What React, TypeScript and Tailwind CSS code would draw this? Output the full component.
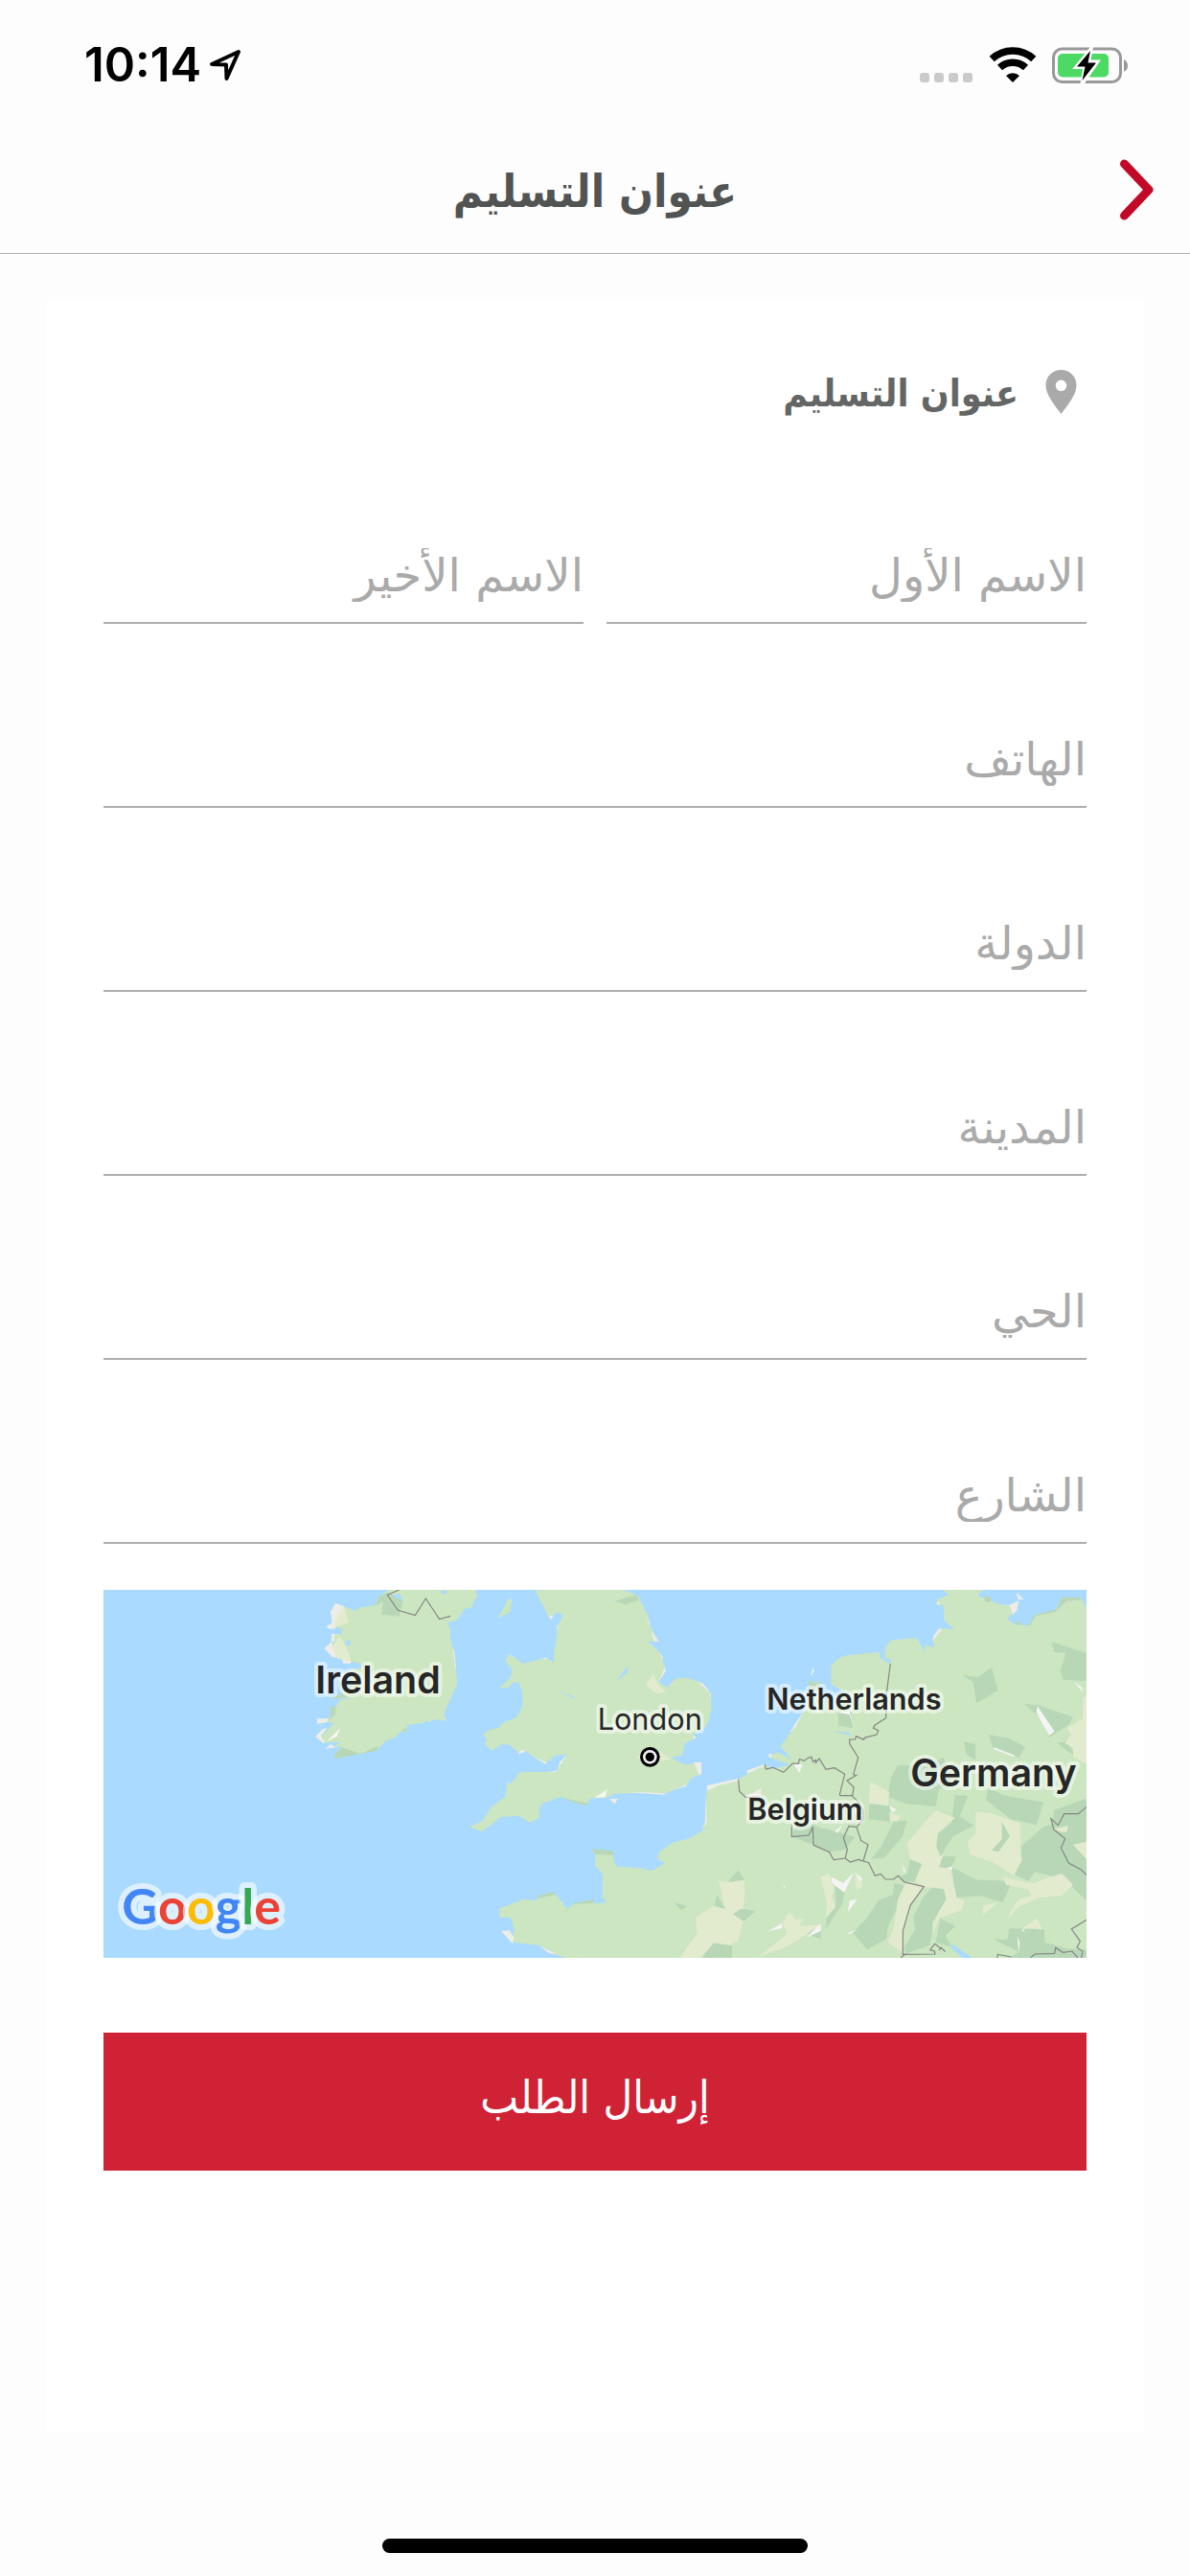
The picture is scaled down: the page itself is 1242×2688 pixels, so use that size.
import { useState } from "react";

const FIELDS = [
    { id: "firstName", label: "الاسم الأول", half: true },
    { id: "lastName", label: "الاسم الأخير", half: true },
    { id: "phone", label: "الهاتف", half: false },
    { id: "country", label: "الدولة", half: false },
    { id: "city", label: "المدينة", half: false },
    { id: "district", label: "الحي", half: false },
    { id: "street", label: "الشارع", half: false },
];

function StatusBar() {
    return (
        <div dir="ltr" className="flex h-[132px] items-center justify-between pt-1 pl-[88px] pr-16 text-black">
            <div className="flex items-center gap-2">
                <span className="font-[Inter] text-[49px] leading-[56px] font-semibold">10:14</span>
                <svg width="34" height="34" viewBox="0 0 34 34" fill="none" stroke="currentColor" strokeWidth="4" strokeLinejoin="round">
                    <path d="M31 3 L3 16 L18 16.500 L18.500 31 Z" />
                </svg>
            </div>
            <div className="flex items-center gap-4">
                <svg width="56" height="38" viewBox="0 0 56 38" fill="#cacaca">
                    <rect x="0" y="27" width="10" height="10" rx="3" />
                    <rect x="15" y="27" width="10" height="10" rx="3" />
                    <rect x="30" y="27" width="10" height="10" rx="3" />
                    <rect x="45" y="27" width="10" height="10" rx="3" />
                </svg>
                <svg width="50" height="38" viewBox="0 0 50 38">
                    <path d="M3.200 12.500 A32 32 0 0 1 46.800 12.500" fill="none" stroke="#000" strokeWidth="7.500" />
                    <path d="M11.500 21.500 A20 20 0 0 1 38.500 21.500" fill="none" stroke="#000" strokeWidth="7.500" />
                    <path d="M18 30 A10.500 10.500 0 0 1 32 30 L25 37 Z" />
                </svg>
                <svg width="80" height="38" viewBox="0 0 80 38">
                    <rect x="1.500" y="2" width="70" height="34.500" rx="9" fill="none" stroke="#999" strokeWidth="3" />
                    <rect x="6" y="7" width="53" height="24.500" rx="5" fill="#4cd964" />
                    <path d="M75 13 Q79 15 79 19.500 Q79 24 75 26 Z" fill="#999" />
                    <path d="M40 0 L21 23 L32 23 L29.500 38 L34 38 L51 13.500 L40.500 13.500 L43 0 Z" fill="#fff" />
                    <path d="M40 4 L26 20.500 L34.500 20.500 L31.500 35 L46 16.500 L37.500 16.500 Z" />
                </svg>
            </div>
        </div>
    );
}

function Header() {
    return (
        <header className="grid h-[133px] grid-cols-[1fr_auto_1fr] items-center border-b border-[#b0b0b0] px-9">
            <button type="button" aria-label="رجوع" className="justify-self-start">
                <svg width="40" height="64" viewBox="0 0 40 64" fill="none" stroke="#c20a28" strokeWidth="9" strokeLinecap="round" strokeLinejoin="round">
                    <path d="M7.500 5 L33 32 L7.500 59" />
                </svg>
            </button>
            <h1 className="pt-1 text-[47px] leading-[64px] font-bold text-[#525453]">عنوان التسليم</h1>
        </header>
    );
}

// Drawn three units to the pixel of a 1026px wide card
function DeliveryMap() {
    return (
        <svg viewBox="0 0 3078 1152" direction="ltr" className="mt-12 block w-full" role="img" aria-label="خريطة">
            <rect width="3078" height="1152" fill="#aadaff" />

            {/* Ireland */}
            <g transform="translate(-24 -27)">
                <path fill="#cbe6c0" d="M915 27H1190L1194 45L1175 83L1157 85L1130 122L1100 130L1110 150V182L1120 215L1131 310V322L1110 370L1090 415L1097 437L1070 432L1040 440L1035 430L1032 442L975 451V470L950 475L940 487L905 502L880 530L830 540L750 555L747 545L770 515L735 523L765 505L745 505L718 505L705 487L745 445L722 440L738 415L733 395H750L763 372L800 365L738 368L770 350L800 320L790 280L830 270V258L797 252L770 245L740 200L748 165L765 165L782 187L795 183L797 200H780L770 180L771 150L745 140L740 110L780 80L818 93L822 83L872 76L885 50Z" />
                <path fill="#b7d7b7" d="M872 76L888 47L915 35L962 60L950 110L894 104L900 64ZM733 395L752 393L748 420L725 438L738 415ZM747 545L768 520L830 540L885 515L880 530L750 555ZM955 470L970 458L975 470ZM738 368L770 350L790 362Z" />
                <path fill="#e3ebcf" d="M778 80L792 130L745 145L742 105ZM762 170L782 200L800 250L770 245L740 236L745 200Z" />
                <path fill="#edede6" d="M750 69L778 78L745 128L752 148L730 150L722 141L740 130L735 95ZM738 165H747V187L738 190ZM738 190L752 236L740 236L715 211ZM770 245L800 250L797 258L775 257ZM693 430H730L722 442L692 446ZM710 462L725 460L705 484L718 505L712 507L687 487ZM735 510L750 520L718 525ZM1118 213H1122L1128 272H1125ZM1090 430L1097 432V438Z" />
                <path fill="#f7f7f5" d="M765 460L755 485L722 503Z" />
                <path fill="#aadaff" d="M928 44L950 38L962 62ZM1075 33L1100 27L1095 42ZM782 190L795 182L797 200H780Z" />
                <path fill="none" stroke="#858585" strokeWidth="3.500" d="M950 27L913 43L946 91L1000 107L1033 54L1076 119L1110 109" />
            </g>

            {/* Great Britain */}
            <g transform="translate(1116 -27)">
                <path fill="#cbe6c0" d="M163 55L158 95L120 117L150 57Z" />
                <path fill="#cbe6c0" d="M240 27H514L545 40L557 45L588 105L596 140L620 186L590 190L628 225L642 270L640 290L622 315L648 332L677 304L715 303L755 318L785 350L788 398L778 440L762 465L730 478L740 490L705 507L695 545L662 552L700 573L755 569V602L720 620L712 637L640 665L550 662L484 665L460 678L430 678L407 680L398 700L370 695L315 676L258 695L249 712L248 740L220 757L186 735L128 738L98 762L70 784L30 768L70 751L98 707L142 674L148 628L160 634L188 598L290 596L304 598L312 570L335 542L300 545L270 570L230 550L205 530L185 537L152 511H130L100 530L78 510L84 492L72 481L93 464L122 460L133 445L178 425L196 390L195 347L183 316L165 318L152 333L123 335L155 305L165 278L141 249L157 227L195 258L270 241L294 254L295 220L303 175L307 140L323 106L304 97L280 115L240 38Z" />
                <path fill="#b7d7b7" d="M483 62L552 43L560 58L520 73ZM315 676L350 684L400 695L398 701L370 697Z" />
                <path fill="#e3ebcf" d="M605 290L620 320L645 348L615 350L582 325ZM548 548L630 535L662 558L630 562L565 555Z" />
                <path fill="#edede6" d="M276 108H294L285 120ZM303 135L308 142L305 155ZM248 243L270 239L277 243ZM182 535L200 528L205 534L187 540ZM228 548L272 567L268 572ZM335 541L312 568L310 580L302 598H280L305 592ZM599 155L623 188H608ZM585 105L596 135L592 136ZM625 225L636 236L634 245ZM640 270L645 280L622 315L634 285ZM742 312L760 320L782 345L778 345ZM783 350H786V380ZM732 567H756V602L750 608ZM728 486H741L732 494ZM468 682L494 680L485 697ZM518 664L570 660L640 664L642 668L560 663ZM655 655L712 636L708 642Z" />
                <path fill="#f7f7f5" d="M461 652L455 676L421 678Z" />
                <path fill="#aadaff" d="M527 267L526 285L488 312ZM300 341L360 363V368Z" />
            </g>

            {/* Mainland Europe */}
            <g transform="translate(2016 -27)">
                <path fill="#cbe6c0" d="M613 27H738L720 45L790 72L820 75L835 100L813 117L835 135L880 138L900 107L965 92L985 52H1045L1062 82V1179H-570L-605 1168L-650 1140L-735 1130L-730 1090L-742 1052H-776V1024L-700 995L-657 1000V985L-605 975L-562 1026L-545 1010L-480 1003L-478 1010L-440 1004L-453 990V918L-476 890V855L-487 840L-420 845V870L-410 893L-340 897L-298 906L-258 882L-282 868L-275 845L-230 817L-180 805L-140 780L-130 750L-127 655L-105 640L-30 620L55 573L80 587L130 575L65 550L95 535L140 557L103 517L150 455L180 400L200 360L192 310L215 318L230 312L225 340L260 390L285 400L300 345L262 322V265L285 242L312 232L413 222L418 242L446 258L450 245L430 240L432 208L450 184L530 178L556 223V200L585 207L580 183L600 148L648 150L615 122V77L592 73L595 58L630 43Z" />
                <path fill="#aadaff" d="M270 470L318 473L325 483ZM75 560L130 572L120 577L70 568ZM640 892L650 912L652 958L648 958ZM635 1132L705 1179H675L645 1155ZM1054 50L1062 30V82Z" />
                <path
                    fill="#b7d7b7"
                    d="M743 45L768 53L755 67L743 62ZM835 130L850 124L860 138ZM862 136L885 137L903 108L963 97L1000 62L1045 58V50H985L968 88L900 105L880 136ZM953 190L1062 225V313L990 308L980 280L998 224L961 222ZM673 294L722 300L765 270L785 341L718 382L707 316ZM868 384L910 388L1020 425L1005 450L945 490L930 440ZM755 480L820 492L870 518L850 552L770 522ZM678 502L714 510V560L685 540ZM970 505L1000 503L1030 548L1000 530ZM285 410L325 408L330 460L285 452ZM470 577L560 575L615 552L640 640L600 650L590 705L500 697L438 675L450 615ZM755 645L800 670L928 692L905 762L825 745L747 684ZM650 670L690 672L665 735L710 765L640 800L605 860L655 862L635 900L600 895L612 860L592 830L600 790L640 755ZM960 716L1062 680V1000L1010 950L980 935L960 925L900 910L880 938L830 915L858 880V830L925 770L955 760ZM382 695L445 700L447 752L380 745ZM460 750L500 750L485 800L430 865L388 870L420 830ZM150 770L205 765L320 795L338 800L305 840L260 848L208 826L140 800ZM795 750L822 795L785 847L765 842L798 805ZM510 868L547 885L525 940L490 942L480 925L500 915ZM640 895L720 935L830 938L800 1005L730 985L655 990ZM460 945L505 955L440 1080L435 1120L375 1152L330 1100L370 1060L410 1000L455 982ZM580 957L615 963L623 995L595 1040L570 1140L500 1165L490 1150L525 1090L520 1050L550 990ZM275 945L307 965L297 1010L245 1090L250 1040L278 1010ZM605 1055L650 1080L620 1110L640 1145L590 1130ZM820 1087L930 1090V1130L1000 1150L1062 1155V1179H820L850 1160L770 1120L815 1122ZM162 1122L230 1070V1120L200 1110L180 1095ZM-230 1004L-187 1018L-208 1030ZM-60 940L-28 905L-10 935ZM-102 1018L-95 983L-70 1025ZM-45 1042L-20 1025L25 1033L-12 1064ZM-138 1170L-105 1132L-48 1140V1179H-138ZM-657 985L-605 972L-602 982L-657 993ZM-548 1008L-480 996L-482 1008L-548 1010ZM-487 838L-420 844V857L-476 855ZM192 310L215 320L230 314L225 340L195 350Z"
                />
                <path
                    fill="#e3ebcf"
                    d="M385 627L445 660L440 703L380 695ZM445 725L482 733L470 752L447 750ZM500 820L565 745L590 718L650 740L595 790L592 830L612 860L600 895L635 900L655 990L680 1000L670 1030L600 1055L580 1110V1070L623 995L615 963L555 957L525 938L547 885L510 870ZM715 722L760 725L855 758V850L860 870L835 922L770 880L697 855L690 815L715 790ZM1052 365L1062 360V572L1020 550V520L995 508L1015 480L1000 460L1050 430ZM800 925L860 940L900 945L950 925L985 915L1020 950L985 985L915 990L850 1018L820 1053V1040L850 995L890 985L880 965L810 950ZM740 1015L785 1005L735 1047ZM495 945L553 955L510 1015L488 1090V1165L440 1130L460 1080L470 1000ZM865 1085L905 1055L925 1090ZM958 775L1005 765L1000 785L985 785ZM1020 825L1062 815V870ZM230 925L255 915L270 960L265 990L277 1020L245 1055L250 1010ZM335 910L360 935L358 960L342 965ZM32 1179L125 1103L110 1070L133 1035L150 1060L180 1055L160 1080L230 1075L165 1120L110 1150L60 1165ZM-90 936L-50 943L-10 933L-7 970L-13 1020V1064L-30 1128L-48 1130V1140L-105 1132L-138 1170L-150 1179H-212L-157 1103L-162 1052L-95 1010L-70 1025Z"
                />
                <path fill="#b7d7b7" d="M797 752L822 797L787 847L765 842L797 808ZM652 750L648 790L605 862L592 830L598 790ZM-102 1018L-95 983L-70 1025ZM-60 940L-28 905L-10 935ZM-45 1042L-20 1025L25 1033L-12 1064Z" />
                <path fill="#edede6" d="M842 35L866 57H848ZM820 75L850 60L845 90L832 104ZM600 148L610 150L580 187L583 170ZM590 70L600 62L603 74ZM205 270L210 282L197 297ZM160 430L175 410L152 455L130 478ZM65 540L80 542L70 555ZM0 592L55 572L52 578L0 603ZM-127 640L-30 618L-28 625L-90 640L-125 656ZM-130 657L-127 755L-140 778L-132 750ZM0 670L45 648L40 678L0 680ZM-770 1096L-745 1093L-730 1115L-735 1135ZM-650 1142L-605 1163L-602 1168L-620 1165Z" />
                <path fill="#f4f4f4" d="M285 410L320 405L333 458L320 418ZM908 390L962 470L945 483L905 412ZM772 520L838 545L835 550L770 525ZM145 573H173L163 600ZM443 703L467 715L455 724ZM300 763L280 790L275 780ZM262 925L300 945L335 910L303 975L265 945ZM340 915L360 930L352 940ZM320 1000L345 995L315 1035ZM62 1097L108 1070L110 1085ZM230 1070V1095L185 1115ZM315 1100L345 1092L320 1105ZM486 888L495 905L490 915ZM845 1110L853 1130L850 1165ZM870 1080L865 1097L860 1095ZM625 897L642 893L640 905ZM335 700L345 710L338 732ZM1025 315L1052 350L1045 330ZM110 948L120 957L118 962Z" />
                <path
                    fill="none"
                    stroke="#858585"
                    strokeWidth="3.500"
                    d="M448 258L436 350L434 428L400 450L394 460L410 467L405 480L367 490L365 496L340 485L338 495H320V508L347 552L332 605L341 608L312 624L333 645L329 673L345 688L363 720V745L342 770L318 766L301 803L313 840L307 865M55 573L58 588L80 583L113 598L142 570L160 571L163 557L178 562L188 554L200 550L206 565L214 560V568L225 555L246 589L273 584L305 604L289 668L291 671H329M-28 620L-25 657L-5 677L38 675M139 760V800L192 795L205 770L207 826L257 848L270 872L307 867L322 879L348 871L380 881L400 922L418 916L432 933H458L472 922L492 942L553 956L510 1015L487 1095V1168L588 1167L586 1158L572 1154L587 1135L606 1150L600 1155M606 1146L620 1160M342 770L356 812L378 824L363 876M480 1179L497 1165M1062 706L1037 728H992L973 764L951 743L959 777L995 806L982 835L1006 882L1044 902L1062 920M1062 1060L1015 1089L1042 1127L1032 1147L1050 1158L1046 1179M886 1179L900 1167L962 1165L965 1147L988 1162L1017 1158L1035 1179M782 1179L784 1168L827 1176"
                />
            </g>

            <circle cx="1711" cy="523" r="31" fill="#000" />
            <circle cx="1711" cy="523" r="22" fill="#f1f1f1" />
            <circle cx="1711" cy="523" r="14" fill="#000" />

            <g fill="#262626" stroke="#fff" strokeOpacity="0.5" strokeWidth="24" strokeLinejoin="round" paintOrder="stroke" fontFamily="Inter, 'Liberation Sans', sans-serif" fontWeight="600">
                <text x="664" y="323" fontSize="118">Ireland</text>
                <text x="1547" y="439" fontSize="92" fontWeight="400">London</text>
                <text x="2077" y="375" fontSize="92">Netherlands</text>
                <text x="2017" y="721" fontSize="92">Belgium</text>
                <text x="2527" y="616" fontSize="118">Germany</text>
            </g>
            <text x="58" y="1046" fontSize="156" fontFamily="Lato, sans-serif" fontWeight="700" stroke="#fff" strokeOpacity="0.6" strokeWidth="36" strokeLinejoin="round" paintOrder="stroke">
                <tspan fill="#4285f4">G</tspan>
                <tspan fill="#ea4335">o</tspan>
                <tspan fill="#fbbc05">o</tspan>
                <tspan fill="#4285f4">g</tspan>
                <tspan fill="#34a853">l</tspan>
                <tspan fill="#ea4335">e</tspan>
            </text>
        </svg>
    );
}

export default function App() {
    const [values, setValues] = useState<Record<string, string>>({});

    return (
        <div dir="rtl" lang="ar" className="flex min-h-screen flex-col bg-[#fdfdfd] font-['DejaVu_Sans_Condensed','DejaVu_Sans',sans-serif]">
            <StatusBar />
            <Header />
            <main className="mx-12 mt-12 flex-1 bg-white px-[60px] pt-12">
                <div className="flex h-24 items-center gap-7 pr-[10px]">
                    <svg width="33" height="46" viewBox="0 0 33 46" fill="#aaa">
                        <path fillRule="evenodd" d="M16.500 0 C7 0 0.500 7 0.500 16 C0.500 26 10 37 16.500 46 C23 37 32.500 26 32.500 16 C32.500 7 26 0 16.500 0 Z M16.500 10.500 A5.800 5.800 0 1 1 16.500 22.100 A5.800 5.800 0 1 1 16.500 10.500 Z" />
                    </svg>
                    <h2 className="pt-1 text-[39px] leading-[56px] font-bold text-[#646665]">عنوان التسليم</h2>
                </div>
                <form onSubmit={(e) => e.preventDefault()}>
                    <div className="mt-[98px] grid grid-cols-2 gap-x-6 gap-y-24">
                        {FIELDS.map(({ id, label, half }) => (
                            <input
                                key={id}
                                id={id}
                                type="text"
                                aria-label={label}
                                placeholder={label}
                                value={values[id] ?? ""}
                                onChange={(e) => setValues({ ...values, [id]: e.target.value })}
                                className={`h-24 w-full border-b-2 border-[#aeaeae] bg-transparent pb-1 font-['DejaVu_Sans',sans-serif] text-[48px] leading-[84px] text-[#525453] outline-none placeholder:text-[#aaa] ${
                                    half ? "" : "col-span-2"
                                }`}
                            />
                        ))}
                    </div>
                    <DeliveryMap />
                    <button type="submit" className="mt-[78px] h-36 w-full bg-[#d02235] pb-2 text-[47px] text-white">
                        إرسال الطلب
                    </button>
                </form>
            </main>
            <footer className="flex h-[150px] items-end justify-center pb-6">
                <div className="h-[15px] w-[444px] rounded-full bg-black" />
            </footer>
        </div>
    );
}
